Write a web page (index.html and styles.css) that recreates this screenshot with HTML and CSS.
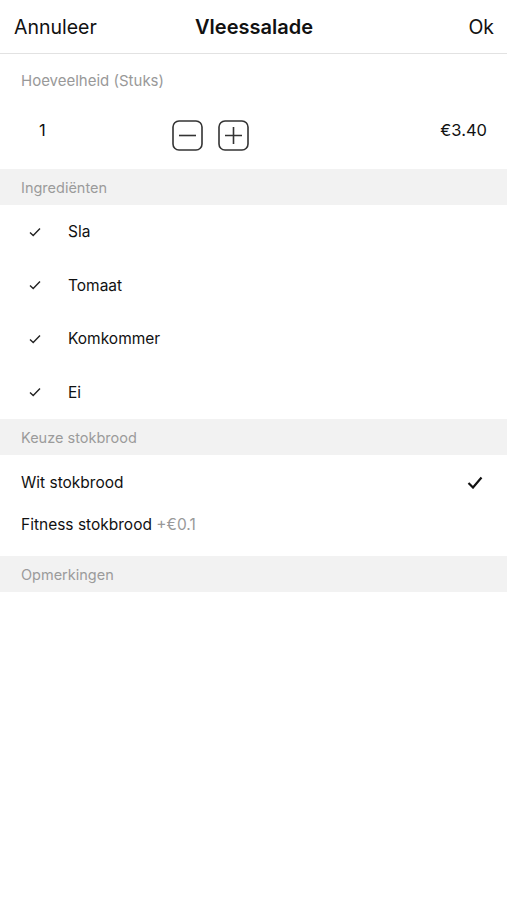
FILE: index.html
```html
<!DOCTYPE html>
<html lang="nl">
<head>
<meta charset="utf-8">
<link rel="stylesheet" href="styles.css">
</head>
<body>
<div class="app">
  <header class="nav">
    <span class="nav-btn nav-left">Annuleer</span>
    <span class="nav-title">Vleessalade</span>
    <span class="nav-btn nav-right">Ok</span>
  </header>

  <div class="label-plain">Hoeveelheid (Stuks)</div>
  <div class="qty-row">
    <span class="qty">1</span>
    <div class="steppers">
      <span class="step">
        <svg width="31" height="31" viewBox="0 0 31 31"><rect x="1" y="1" width="29" height="29" rx="6" fill="none" stroke="#333" stroke-width="1.6"/><path d="M7 15.5H24" stroke="#333" stroke-width="1.6"/></svg>
      </span>
      <span class="step">
        <svg width="31" height="31" viewBox="0 0 31 31"><rect x="1" y="1" width="29" height="29" rx="6" fill="none" stroke="#333" stroke-width="1.6"/><path d="M7 15.5H24M15.5 7V24" stroke="#333" stroke-width="1.6"/></svg>
      </span>
    </div>
    <span class="price">€3.40</span>
  </div>

  <div class="section">Ingrediënten</div>
  <ul class="ingredients">
    <li><svg class="tick" width="12" height="10" viewBox="0 0 12 10"><path d="M1 5.5L4.2 8.5L11 1.5" fill="none" stroke="#222" stroke-width="1.4"/></svg><span>Sla</span></li>
    <li><svg class="tick" width="12" height="10" viewBox="0 0 12 10"><path d="M1 5.5L4.2 8.5L11 1.5" fill="none" stroke="#222" stroke-width="1.4"/></svg><span>Tomaat</span></li>
    <li><svg class="tick" width="12" height="10" viewBox="0 0 12 10"><path d="M1 5.5L4.2 8.5L11 1.5" fill="none" stroke="#222" stroke-width="1.4"/></svg><span>Komkommer</span></li>
    <li><svg class="tick" width="12" height="10" viewBox="0 0 12 10"><path d="M1 5.5L4.2 8.5L11 1.5" fill="none" stroke="#222" stroke-width="1.4"/></svg><span>Ei</span></li>
  </ul>

  <div class="section">Keuze stokbrood</div>
  <ul class="choices">
    <li><span>Wit stokbrood</span><svg class="big-tick" width="16" height="13" viewBox="0 0 16 13"><path d="M1.5 7L6 11.5L14.5 1.5" fill="none" stroke="#111" stroke-width="2.2"/></svg></li>
    <li><span>Fitness stokbrood <em class="extra">+€0.1</em></span></li>
  </ul>

  <div class="section">Opmerkingen</div>
</div>
</body>
</html>
```

FILE: styles.css
```css
* { box-sizing: border-box; }
html, body { margin: 0; padding: 0; background: #fff; }
body {
  font-family: Inter, "Noto Sans", "Liberation Sans", sans-serif;
  color: #111;
}
.app { width: 507px; }

.nav {
  height: 54px;
  display: grid;
  grid-template-columns: 1fr auto 1fr;
  align-items: center;
  padding: 0 13px 0 14px;
  border-bottom: 1px solid #e2e2e2;
}
.nav-btn { font-size: 19.5px; color: #111; }
.nav-left { justify-self: start; }
.nav-right { justify-self: end; }
.nav-title { font-size: 20px; font-weight: 600; }

.label-plain {
  height: 52px;
  display: flex;
  align-items: center;
  padding: 0 21px;
  font-size: 15px;
  color: #999;
}

.qty-row {
  height: 63px;
  display: flex;
  align-items: center;
  padding: 0 20px 15px 39px;
  font-size: 16.5px;
}
.qty { width: 133px; }
.steppers { display: flex; gap: 15px; padding-top: 10px; }
.step { display: flex; }
.price { margin-left: auto; }

.section {
  height: 36px;
  background: #f2f2f2;
  display: flex;
  align-items: center;
  padding: 0 21px;
  font-size: 14.5px;
  color: #9b9b9b;
}

.ingredients, .choices { list-style: none; margin: 0; padding: 0; }
.ingredients li {
  height: 53.5px;
  display: flex;
  align-items: center;
  padding: 0 0 0 29px;
  font-size: 15.5px;
}
.tick { margin-right: 27px; }

.choices { padding: 6px 0 11px; }
.choices li {
  height: 42px;
  display: flex;
  align-items: center;
  justify-content: space-between;
  padding: 0 24px 0 21px;
  font-size: 15.5px;
}
.extra { font-style: normal; color: #999; }
```
